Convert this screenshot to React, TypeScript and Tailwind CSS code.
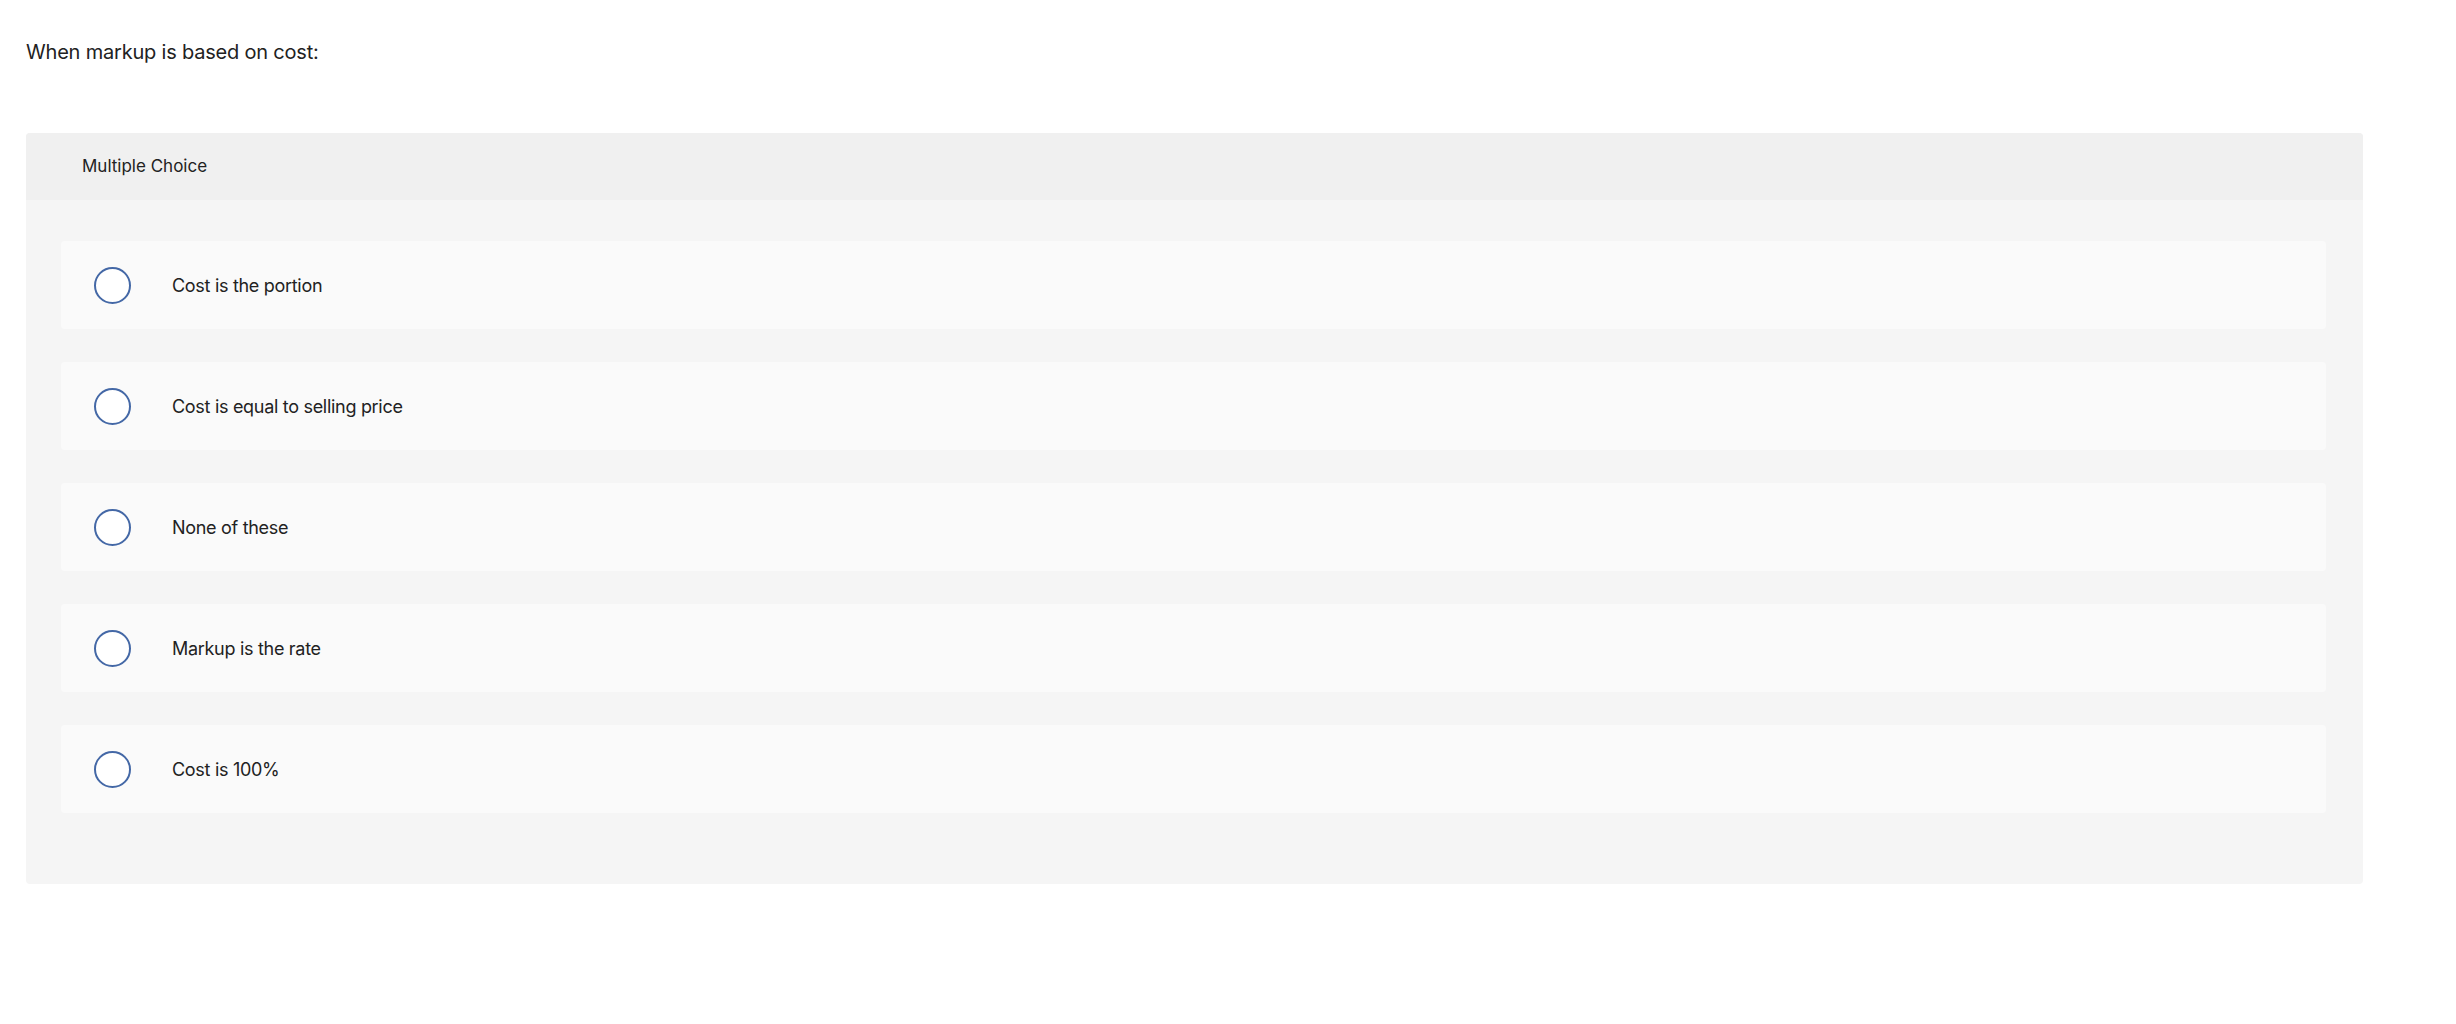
import React from "react";

const options = [
  "Cost is the portion",
  "Cost is equal to selling price",
  "None of these",
  "Markup is the rate",
  "Cost is 100%",
];

export default function App() {
  return (
    <div className="min-h-[1024px] w-full bg-white text-[#222] font-['Inter','Liberation_Sans',sans-serif]">
      <div className="pl-[26px] pr-[93px] pt-[38px]">
        <p className="text-[20px] leading-[28px] tracking-[-0.2px]">When markup is based on cost:</p>
        <div className="mt-[67px] w-[2337px] overflow-hidden rounded-[4px] bg-[#f5f5f5]">
          <div className="flex h-[67px] items-center bg-[#f0f0f0] pl-[56px] text-[17px]">
            Multiple Choice
          </div>
          <div className="flex flex-col gap-[33px] pb-[71px] pl-[35px] pr-[37px] pt-[41px]">
            {options.map((o) => (
              <div
                key={o}
                className="flex h-[88px] items-center rounded-[4px] bg-[#fafafa] pl-[33px]"
              >
                <span className="h-[37px] w-[37px] shrink-0 rounded-full border-2 border-[#4468a6] bg-white" />
                <span className="ml-[41px] text-[18px] tracking-[-0.3px]">{o}</span>
              </div>
            ))}
          </div>
        </div>
      </div>
    </div>
  );
}
